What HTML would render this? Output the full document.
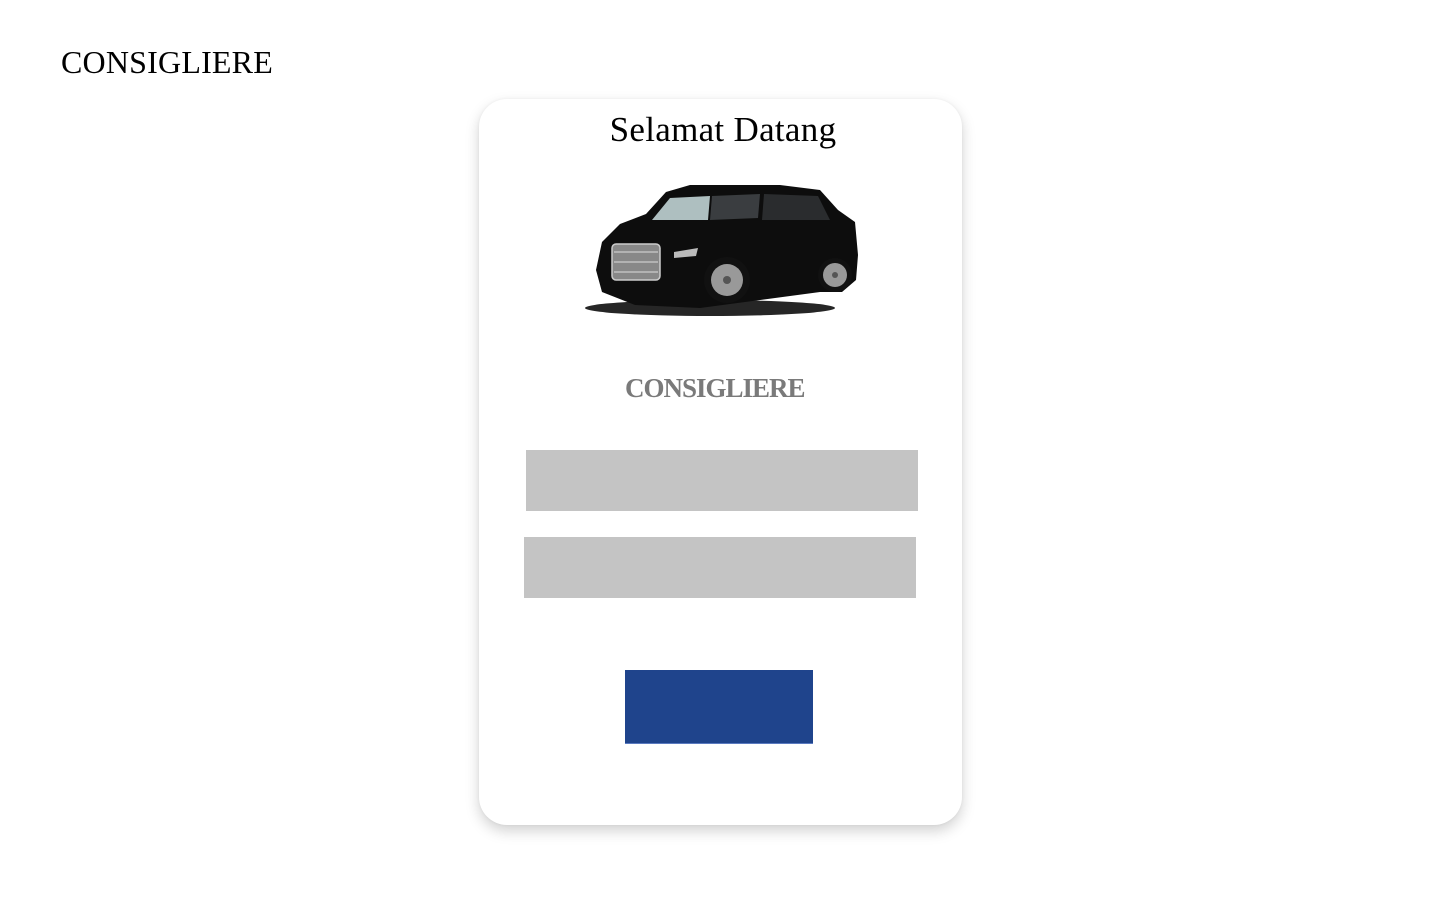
<!DOCTYPE html>
<html><head><meta charset="utf-8"><style>
html,body{margin:0;padding:0;background:#fff;width:1440px;height:900px;overflow:hidden;font-family:"Liberation Serif",serif;}
.logo{position:absolute;left:61px;top:44px;font-size:32px;color:#000;letter-spacing:0.2px;}
.card{position:absolute;left:479px;top:99px;width:483px;height:726px;background:#fff;border-radius:28px;box-shadow:0 6px 14px rgba(0,0,0,0.18),0 0 3px rgba(0,0,0,0.05);}
.title{position:absolute;left:0;width:100%;top:110px;text-align:center;font-size:35px;color:#000;margin-left:3px;letter-spacing:0.3px}
.brand{position:absolute;left:625px;top:373px;font-size:27px;font-weight:bold;color:#7a7a7a;letter-spacing:-1px}
.in1{position:absolute;left:526px;top:450px;width:392px;height:61px;background:#c4c4c4}
.in2{position:absolute;left:524px;top:537px;width:392px;height:61px;background:#c4c4c4}
.btn{position:absolute;left:625px;top:670px;width:188px;height:74px;background:#1f448c;box-shadow:inset 0 -1px 0 #5a7ac0}
svg{position:absolute;left:580px;top:180px}
</style></head><body>
<div class="logo">CONSIGLIERE</div>
<div class="card"></div>
<div class="title">Selamat Datang</div>
<svg width="285" height="140" viewBox="0 0 285 140">
<ellipse cx="130" cy="128" rx="125" ry="8" fill="#000" opacity="0.85"/>
<path d="M22 62 L40 44 L66 34 L86 12 L110 5 L200 5 L240 10 L258 30 L275 42 L278 75 L276 100 L262 112 L240 112 L150 124 L120 128 L55 125 L22 112 L16 90 Z" fill="#0d0d0d"/>
<path d="M72 40 L90 18 L130 16 L128 40 Z" fill="#aebfc0"/>
<path d="M132 16 L180 14 L178 38 L130 40 Z" fill="#3a3d40"/>
<path d="M184 14 L238 16 L250 40 L182 40 Z" fill="#2a2c2e"/>
<rect x="32" y="64" width="48" height="36" rx="4" fill="#888" stroke="#ccc" stroke-width="1.5"/>
<path d="M34 72 H78 M34 82 H78 M34 92 H78" stroke="#ddd" stroke-width="1"/>
<path d="M94 72 L118 68 L116 76 L94 78 Z" fill="#bbb"/>
<circle cx="147" cy="100" r="23" fill="#111"/><circle cx="147" cy="100" r="16" fill="#999"/><circle cx="147" cy="100" r="4" fill="#555"/>
<circle cx="255" cy="95" r="17" fill="#111"/><circle cx="255" cy="95" r="12" fill="#999"/><circle cx="255" cy="95" r="3" fill="#555"/>
</svg>
<div class="brand">CONSIGLIERE</div>
<div class="in1"></div>
<div class="in2"></div>
<div class="btn"></div>
</body></html>
